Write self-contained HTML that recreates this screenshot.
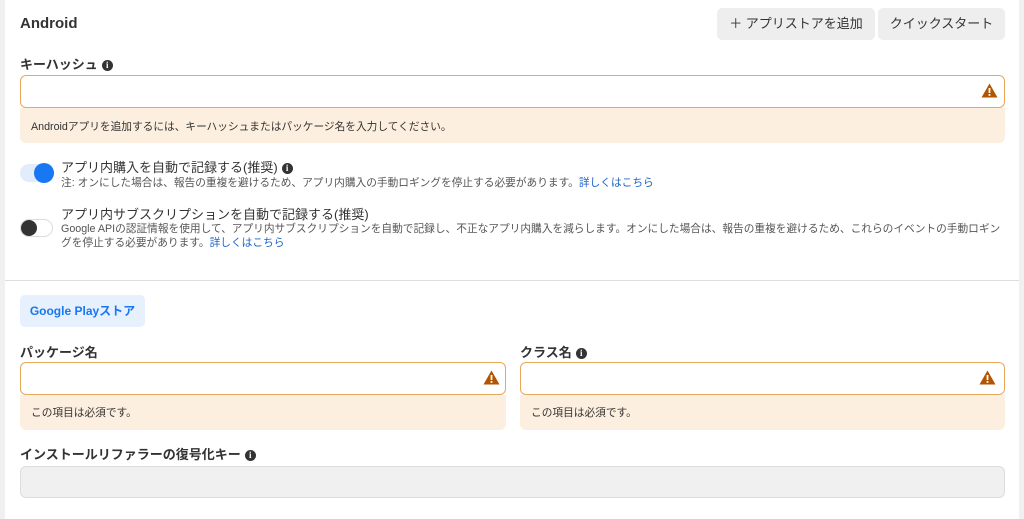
<!DOCTYPE html><html><head><meta charset="utf-8"><style>
body{margin:0;width:1024px;height:519px;background:#f0f0f0;font-family:"Liberation Sans","Noto Sans CJK JP",sans-serif;color:#1c1e21;overflow:hidden;position:relative}
.card{position:absolute;left:5px;top:0;width:1014px;height:519px;background:#fff}
.a{position:absolute;white-space:nowrap}
.inp{position:absolute;border:1.5px solid #e8a85c;border-radius:6px;background:#fff;box-sizing:border-box}
.err{position:absolute;background:#fdefdf;border-radius:0 0 6px 6px;font-size:10.7px;color:#333}
.btn{position:absolute;background:#eeeeee;border-radius:5px;font-size:13px;color:#333;text-align:center;line-height:32px}
.i{display:inline-block;width:11px;height:11px;border-radius:50%;background:#333;color:#fff;font-size:9px;line-height:11px;text-align:center;font-weight:bold;vertical-align:1px;margin-left:4px;font-family:"Liberation Serif",serif}
.lbl{font-size:13px;font-weight:bold;color:#333}
</style></head><body>
<div class="card"></div>
<div class="a" style="left:20px;top:15px;font-size:15px;font-weight:bold;color:#333">Android</div>
<div class="btn" style="left:717px;top:8px;width:158px;height:32px">＋ アプリストアを追加</div>
<div class="btn" style="left:878px;top:8px;width:127px;height:32px">クイックスタート</div>
<div class="a lbl" style="left:20px;top:54px">キーハッシュ<span class="i">i</span></div>
<div class="inp" style="left:20px;top:75px;width:985px;height:33px"></div>
<svg class="a" style="left:981px;top:83px" width="17" height="15" viewBox="0 0 17 15"><path d="M8.5 0.5L16.5 14.5H0.5Z" fill="#b35400"/><rect x="7.6" y="5" width="1.8" height="5" fill="#fff"/><rect x="7.6" y="11" width="1.8" height="1.8" fill="#fff"/></svg>
<div class="err" style="left:20px;top:108px;width:985px;height:35px"><span class="a" style="left:11px;top:11px">Androidアプリを追加するには、キーハッシュまたはパッケージ名を入力してください。</span></div>
<div class="a" style="left:20px;top:164px;width:33px;height:18px;border-radius:9px;background:#e3ecfa"></div>
<div class="a" style="left:34px;top:163px;width:20px;height:20px;border-radius:50%;background:#1877f2"></div>
<div class="a" style="left:61px;top:157px;font-size:13px;color:#333">アプリ内購入を自動で記録する(推奨)<span class="i">i</span></div>
<div class="a" style="left:61px;top:175px;font-size:10.7px;color:#555">注: オンにした場合は、報告の重複を避けるため、アプリ内購入の手動ロギングを停止する必要があります。<span style="color:#1b63c8">詳しくはこちら</span></div>
<div class="a" style="left:20px;top:219px;width:33px;height:18px;border-radius:9px;background:#fff;border:1px solid #ddd;box-sizing:border-box"></div>
<div class="a" style="left:21px;top:220px;width:16px;height:16px;border-radius:50%;background:#333"></div>
<div class="a" style="left:61px;top:204px;font-size:13px;color:#333">アプリ内サブスクリプションを自動で記録する(推奨)</div>
<div class="a" style="left:61px;top:222px;font-size:10.7px;color:#555;line-height:14px;white-space:normal;width:942px">Google APIの認証情報を使用して、アプリ内サブスクリプションを自動で記録し、不正なアプリ内購入を減らします。オンにした場合は、報告の重複を避けるため、これらのイベントの手動ロギングを停止する必要があります。<span style="color:#1b63c8">詳しくはこちら</span></div>
<div class="a" style="left:5px;top:280px;width:1014px;height:1px;background:#ddd"></div>
<div class="a" style="left:20px;top:295px;width:125px;height:32px;border-radius:5px;background:#e7f0fd;color:#1877f2;font-size:12px;font-weight:bold;line-height:32px;text-align:center">Google Playストア</div>
<div class="a lbl" style="left:20px;top:342px">パッケージ名</div>
<div class="inp" style="left:20px;top:362px;width:486px;height:33px"></div>
<svg class="a" style="left:483px;top:370px" width="17" height="15" viewBox="0 0 17 15"><path d="M8.5 0.5L16.5 14.5H0.5Z" fill="#b35400"/><rect x="7.6" y="5" width="1.8" height="5" fill="#fff"/><rect x="7.6" y="11" width="1.8" height="1.8" fill="#fff"/></svg>
<div class="err" style="left:20px;top:395px;width:486px;height:35px"><span class="a" style="left:11px;top:10px">この項目は必須です。</span></div>
<div class="a lbl" style="left:520px;top:342px">クラス名<span class="i">i</span></div>
<div class="inp" style="left:520px;top:362px;width:485px;height:33px"></div>
<svg class="a" style="left:979px;top:370px" width="17" height="15" viewBox="0 0 17 15"><path d="M8.5 0.5L16.5 14.5H0.5Z" fill="#b35400"/><rect x="7.6" y="5" width="1.8" height="5" fill="#fff"/><rect x="7.6" y="11" width="1.8" height="1.8" fill="#fff"/></svg>
<div class="err" style="left:520px;top:395px;width:485px;height:35px"><span class="a" style="left:11px;top:10px">この項目は必須です。</span></div>
<div class="a lbl" style="left:20px;top:444px">インストールリファラーの復号化キー<span class="i">i</span></div>
<div class="a" style="left:20px;top:466px;width:985px;height:32px;border-radius:6px;background:#f0f0f0;border:1px solid #ddd;box-sizing:border-box"></div>
</body></html>
